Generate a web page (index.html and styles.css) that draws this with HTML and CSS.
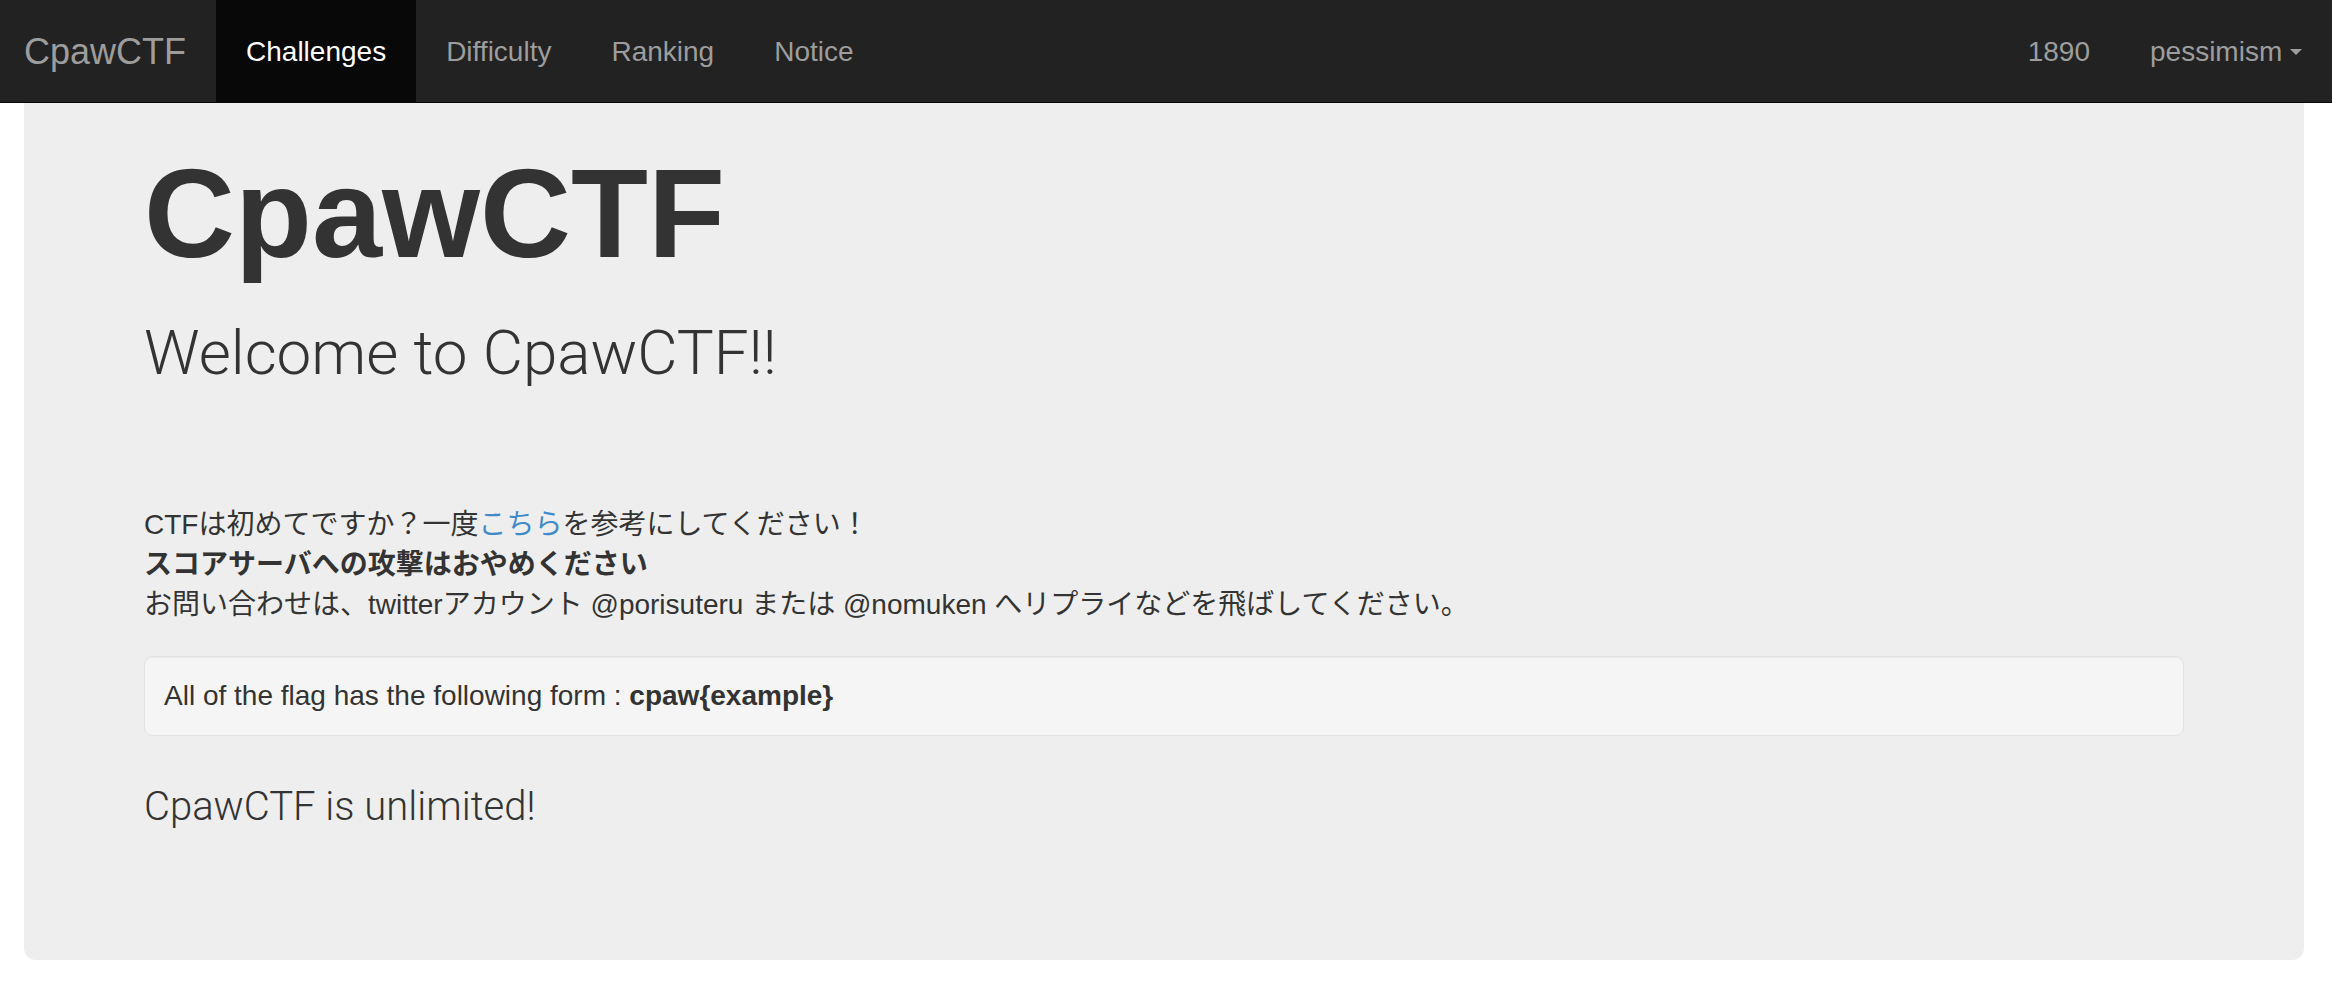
FILE: index.html
```html
<!DOCTYPE html>
<html lang="ja">
<head>
<meta charset="utf-8">
<title>CpawCTF</title>
<link rel="stylesheet" href="styles.css">
</head>
<body>
<nav class="navbar">
  <div class="nav-left">
    <a class="brand" href="#">CpawCTF</a>
    <ul class="nav">
      <li class="active"><a href="#">Challenges</a></li>
      <li><a href="#">Difficulty</a></li>
      <li><a href="#">Ranking</a></li>
      <li><a href="#">Notice</a></li>
    </ul>
  </div>
  <ul class="nav nav-right">
    <li><a href="#">1890</a></li>
    <li><a href="#">pessimism <span class="caret"></span></a></li>
  </ul>
</nav>
<main class="page">
  <div class="jumbotron">
    <h1 class="title">CpawCTF</h1>
    <h2 class="welcome">Welcome to CpawCTF!!</h2>
    <p class="intro">CTFは初めてですか？一度<a class="link" href="#">こちら</a>を参考にしてください！<br><strong>スコアサーバへの攻撃はおやめください</strong><br>お問い合わせは、twitterアカウント @porisuteru または @nomuken へリプライなどを飛ばしてください。</p>
    <div class="well">All of the flag has the following form : <strong>cpaw{example}</strong></div>
    <p class="tagline">CpawCTF is unlimited!</p>
  </div>
</main>
</body>
</html>
```

FILE: styles.css
```css
* { box-sizing: border-box; }

html, body {
  margin: 0;
  padding: 0;
  background: #fff;
}

body {
  font-family: "Liberation Sans", "Noto Sans CJK JP", sans-serif;
  font-size: 28px;
  line-height: 40px;
  color: #333;
}

a { text-decoration: none; }

.navbar {
  display: flex;
  justify-content: space-between;
  align-items: stretch;
  height: 103px;
  background: #222;
  border-bottom: 1px solid #080808;
}

.nav-left {
  display: flex;
  align-items: stretch;
}

.brand {
  display: block;
  padding: 2px 30px 0 24px;
  font-size: 36px;
  line-height: 100px;
  color: #9d9d9d;
}

.nav {
  display: flex;
  margin: 0;
  padding: 0;
  list-style: none;
}

.nav li a {
  display: block;
  padding: 2px 30px 0 30px;
  font-size: 28px;
  line-height: 100px;
  color: #9d9d9d;
  white-space: nowrap;
}

.nav li.active a {
  background: #080808;
  color: #fff;
}

.caret {
  display: inline-block;
  width: 0;
  height: 0;
  margin-left: 0;
  vertical-align: middle;
  border-top: 6px solid #9d9d9d;
  border-left: 6px solid transparent;
  border-right: 6px solid transparent;
  position: relative;
  top: -2px;
}

.page {
  margin: 0 28px 0 24px;
  padding-bottom: 32px;
}

.jumbotron {
  background: #eee;
  border-radius: 0 0 12px 12px;
  padding: 48px 120px 134px 120px;
}

.title {
  margin: 0;
  font-size: 126px;
  line-height: 126px;
  font-weight: bold;
  color: #333;
}

.welcome {
  margin: 46px 0 0 0;
  font-family: "Roboto", "Liberation Sans", sans-serif;
  font-weight: 300;
  font-size: 62px;
  line-height: 60px;
  color: #333;
}

.intro {
  margin: 122px 0 31px 0;
}

.intro strong { font-weight: bold; }

.link { color: #428bca; }

.well {
  min-height: 80px;
  padding: 19px;
  background: #f5f5f5;
  border: 1px solid #e3e3e3;
  border-radius: 8px;
  box-shadow: inset 0 1px 1px rgba(0, 0, 0, 0.05);
}

.tagline {
  margin: 52px 0 0 0;
  font-family: "Roboto", "Liberation Sans", sans-serif;
  font-weight: 300;
  font-size: 40px;
  line-height: 38px;
  color: #333;
}
```
